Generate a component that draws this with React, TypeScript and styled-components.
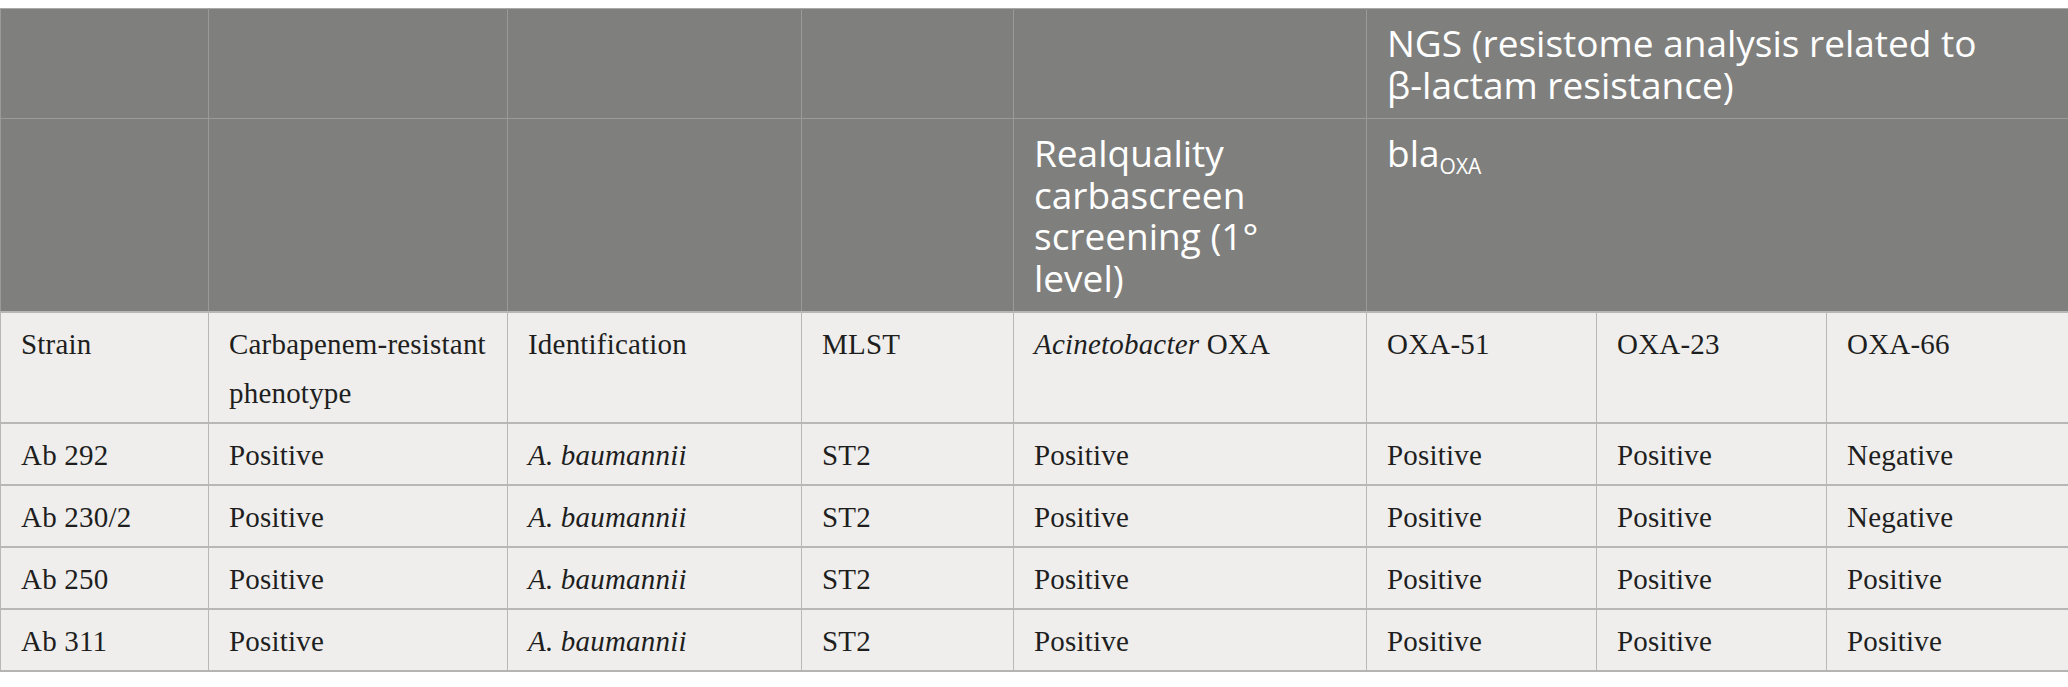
import React from 'react'
import styled, { createGlobalStyle } from 'styled-components'

interface RowModel {
  strain: string
  phenotype: string
  species: string
  mlst: string
  screen: string
  oxa51: string
  oxa23: string
  oxa66: string
}

const rows: Array<RowModel> = [
  { strain: 'Ab 292', phenotype: 'Positive', species: 'A. baumannii', mlst: 'ST2', screen: 'Positive', oxa51: 'Positive', oxa23: 'Positive', oxa66: 'Negative' },
  { strain: 'Ab 230/2', phenotype: 'Positive', species: 'A. baumannii', mlst: 'ST2', screen: 'Positive', oxa51: 'Positive', oxa23: 'Positive', oxa66: 'Negative' },
  { strain: 'Ab 250', phenotype: 'Positive', species: 'A. baumannii', mlst: 'ST2', screen: 'Positive', oxa51: 'Positive', oxa23: 'Positive', oxa66: 'Positive' },
  { strain: 'Ab 311', phenotype: 'Positive', species: 'A. baumannii', mlst: 'ST2', screen: 'Positive', oxa51: 'Positive', oxa23: 'Positive', oxa66: 'Positive' },
]

// column widths measured off the reference, in px
const widths = [208, 299, 294, 212, 353, 230, 230, 242]

const App = () => {
  return (
    <>
      <GlobalStyle />
      <Table>
        <colgroup>
          {widths.map((w, i) => (
            <Col key={i} $w={w} />
          ))}
        </colgroup>
        <thead>
          <tr>
            <HeadCell />
            <HeadCell />
            <HeadCell />
            <HeadCell />
            <HeadCell />
            <HeadCell colSpan={3}>
              NGS (resistome analysis related to <NoWrap>β-lactam</NoWrap> resistance)
            </HeadCell>
          </tr>
          <tr>
            <HeadCell />
            <HeadCell />
            <HeadCell />
            <HeadCell />
            <HeadCell>Realquality carbascreen screening (1° level)</HeadCell>
            <HeadCell colSpan={3}>
              bla<Sub>OXA</Sub>
            </HeadCell>
          </tr>
        </thead>
        <tbody>
          <tr>
            <Cell>Strain</Cell>
            <Cell>Carbapenem-resistant phenotype</Cell>
            <Cell>Identification</Cell>
            <Cell>MLST</Cell>
            <Cell>
              <i>Acinetobacter</i> OXA
            </Cell>
            <Cell>OXA-51</Cell>
            <Cell>OXA-23</Cell>
            <Cell>OXA-66</Cell>
          </tr>
          {rows.map(row => (
            <tr key={row.strain}>
              <Cell>{row.strain}</Cell>
              <Cell>{row.phenotype}</Cell>
              <Cell>
                <i>{row.species}</i>
              </Cell>
              <Cell>{row.mlst}</Cell>
              <Cell>{row.screen}</Cell>
              <Cell>{row.oxa51}</Cell>
              <Cell>{row.oxa23}</Cell>
              <Cell>{row.oxa66}</Cell>
            </tr>
          ))}
        </tbody>
      </Table>
    </>
  )
}

const GlobalStyle = createGlobalStyle`
  body {
    margin: 0;
    padding-top: 8px;
    background: #ffffff;
  }
`

const Table = styled.table`
  width: 2068px;
  table-layout: fixed;
  border-collapse: collapse;
  border-bottom: 2px solid #b4b4b4;
`

const Col = styled.col<{ $w: number }>`
  width: ${p => p.$w}px;
`

const HeadCell = styled.th`
  background: #7f807e;
  color: #ffffff;
  font-family: "Open Sans", "Noto Sans", sans-serif;
  font-weight: 400;
  font-size: 37px;
  line-height: 41.5px;
  text-align: left;
  vertical-align: top;
  padding: 13px 20px;
  border: 1px solid #9a9b99;
  border-top-color: #a9a9a9;
`

const NoWrap = styled.span`
  white-space: nowrap;
`

const Sub = styled.sub`
  font-size: 21px;
  line-height: 0;
  vertical-align: -7px;
`

const Cell = styled.td`
  background: #efeeec;
  color: #1e1e1e;
  font-family: "Liberation Serif", "Times New Roman", serif;
  font-size: 29px;
  letter-spacing: 0.2px;
  line-height: 49px;
  vertical-align: top;
  padding: 7px 20px 4px;
  border: 1px solid #b7b7b7;
  border-top-width: 2px;
`

export default App
